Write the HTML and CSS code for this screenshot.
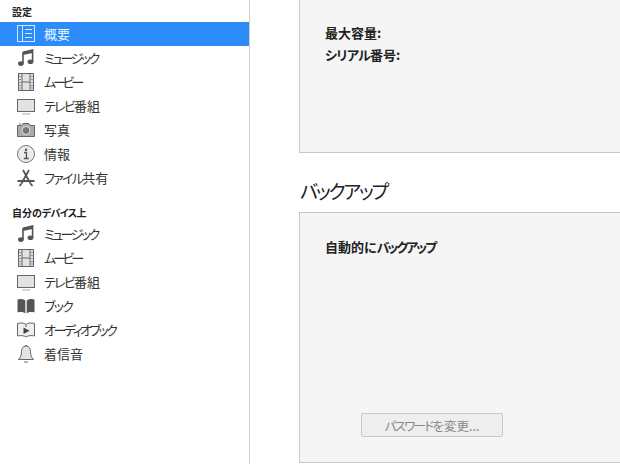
FILE: index.html
```html
<!DOCTYPE html>
<html lang="ja">
<head>
<meta charset="utf-8">
<title>設定</title>
<link rel="stylesheet" href="styles.css">
</head>
<body>
<svg class="defs" width="0" height="0" aria-hidden="true">
  <symbol id="i-music" viewBox="0 0 20 20"><path d="M7 4.200 16.600 2v11.600" fill="none" stroke="#555" stroke-width="1.600"/><path d="M7 4 16.600 2v3L7 7z" fill="#555"/><path d="M7 4v11" stroke="#555" stroke-width="1.600"/><ellipse cx="4.900" cy="15.600" rx="2.900" ry="2.300" fill="#555"/><ellipse cx="14.500" cy="13.800" rx="2.900" ry="2.300" fill="#555"/></symbol>
  <symbol id="i-film" viewBox="0 0 20 20"><rect x="2.500" y="1.500" width="15" height="17" fill="#e2e2e2" stroke="#666"/><path d="M6 2v16M14 2v16M6 10h8" stroke="#666"/><path d="M3 4.500h3M3 7.500h3M3 10.500h3M3 13.500h3M3 16h3M14 4.500h3M14 7.500h3M14 10.500h3M14 13.500h3M14 16h3" stroke="#999"/></symbol>
  <symbol id="i-tv" viewBox="0 0 20 20"><rect x="1.500" y="3.500" width="17" height="12" fill="#e2e2e2" stroke="#666"/><path d="M6 18h8" stroke="#aaa"/></symbol>
  <symbol id="i-camera" viewBox="0 0 20 20"><path d="M1.500 5.500h4l1.500-2h6l1.500 2h4v11h-17z" fill="#aaa" stroke="#666"/><circle cx="10" cy="10.500" r="4" fill="#777" stroke="#e4e4e4"/><path d="M3 4h2" stroke="#777"/></symbol>
  <symbol id="i-info" viewBox="0 0 20 20"><circle cx="10" cy="10" r="8.500" fill="#ececec" stroke="#777"/><circle cx="10" cy="5.800" r="1.200" fill="#555"/><path d="M8 8.500h2.400v5.500M7.800 14.500h5" fill="none" stroke="#555" stroke-width="1.400"/></symbol>
  <symbol id="i-app" viewBox="0 0 20 20"><path d="M7 2l7.500 13.500M13 2 5.500 15.500M1.500 13h17" fill="none" stroke="#555" stroke-width="1.800"/><path d="M3.500 18l2-2.500M16.500 18l-2-2.500" stroke="#555" stroke-width="1.800"/></symbol>
  <symbol id="i-book" viewBox="0 0 20 20"><path d="M9.300 4.500C8 3 4 2.500 1.500 3.500v13c2.500-.8 6-.5 7.800 1zM10.700 4.500c1.300-1.500 5.300-2 7.800-1v13c-2.500-.8-6-.5-7.800 1z" fill="#555"/></symbol>
  <symbol id="i-audio" viewBox="0 0 20 20"><path d="M10 4.500C8.500 3 4.500 2.500 1.500 3.500v12.500c3-.8 6.500-.5 8.500 1 2-1.500 5.500-1.800 8.500-1V3.500c-3-1-7-.5-8.500 1z" fill="#eee" stroke="#666"/><path d="M10 4.500V7" stroke="#666"/><path d="M7.500 7.500v6.500l6-3.200z" fill="#444"/></symbol>
  <symbol id="i-bell" viewBox="0 0 20 20"><path d="M10 2c-3 0-4.500 2.500-4.500 5.500 0 4-1 6-3 8h15c-2-2-3-4-3-8C14.500 4.500 13 2 10 2z" fill="#e4e4e4" stroke="#666"/><path d="M8 17.300c.5 1.300 3.500 1.300 4 0" fill="none" stroke="#666"/><path d="M9.200 1.500h1.600" stroke="#666"/></symbol>
  <symbol id="i-list" viewBox="0 0 20 20"><rect x="1.500" y="1.500" width="17" height="16" fill="none" stroke="#c4f0ff"/><path d="M6.500 2v15M9 5.500h7M9 9.500h7M9 13.500h7" stroke="#c4f0ff"/></symbol>
</svg>
<div class="app">
  <nav class="sidebar">
    <h2 class="side-title">設定</h2>
    <ul class="side-list">
      <li class="item selected"><svg class="icon"><use href="#i-list"/></svg><span class="txt">概要</span></li>
      <li class="item"><svg class="icon"><use href="#i-music"/></svg><span class="txt k4">ミュージック</span></li>
      <li class="item"><svg class="icon"><use href="#i-film"/></svg><span class="txt k2">ムービー</span></li>
      <li class="item"><svg class="icon"><use href="#i-tv"/></svg><span class="txt"><span class="k">テレビ</span>番組</span></li>
      <li class="item"><svg class="icon"><use href="#i-camera"/></svg><span class="txt">写真</span></li>
      <li class="item"><svg class="icon"><use href="#i-info"/></svg><span class="txt">情報</span></li>
      <li class="item"><svg class="icon"><use href="#i-app"/></svg><span class="txt"><span class="k">ファイル</span>共有</span></li>
    </ul>
    <h2 class="side-title second">自分の<span class="k3">デバイス</span>上</h2>
    <ul class="side-list">
      <li class="item"><svg class="icon"><use href="#i-music"/></svg><span class="txt k4">ミュージック</span></li>
      <li class="item"><svg class="icon"><use href="#i-film"/></svg><span class="txt k2">ムービー</span></li>
      <li class="item"><svg class="icon"><use href="#i-tv"/></svg><span class="txt"><span class="k">テレビ</span>番組</span></li>
      <li class="item"><svg class="icon"><use href="#i-book"/></svg><span class="txt k">ブック</span></li>
      <li class="item"><svg class="icon"><use href="#i-audio"/></svg><span class="txt k4">オーディオブック</span></li>
      <li class="item"><svg class="icon"><use href="#i-bell"/></svg><span class="txt">着信音</span></li>
    </ul>
  </nav>
  <main class="content">
    <section class="panel panel-top">
      <p class="label">最大容量:</p>
      <p class="label"><span class="k3">シリアル</span>番号:</p>
    </section>
    <h1 class="heading">バックアップ</h1>
    <section class="panel panel-backup">
      <p class="label">自動的に<span class="k5">バックアップ</span></p>
      <button class="btn" disabled><span class="k">パスワード</span>を変更...</button>
    </section>
  </main>
</div>
</body>
</html>
```
FILE: styles.css
```css
* { box-sizing: border-box; }
html, body { margin: 0; height: 100%; }
body {
  background: #fff;
  color: #1a1a1a;
  font-family: "Noto Sans CJK JP", "Noto Sans", sans-serif;
  font-feature-settings: "palt";
  overflow: hidden;
}
.defs { position: absolute; }
.app { display: flex; width: 620px; height: 464px; }
.sidebar { width: 250px; flex: none; border-right: 1px solid #d0d0d0; }
.side-title {
  margin: 0;
  height: 22px;
  padding: 5px 0 0 12px;
  font-size: 10px;
  line-height: 14px;
  font-weight: 700;
  color: #222;
}
.side-title.second { height: 32px; padding-top: 17px; line-height: 12px; }
.side-list { list-style: none; margin: 0; padding: 0; }
.item {
  display: flex;
  align-items: center;
  height: 24px;
  padding-left: 16px;
  gap: 8px;
  font-size: 13px;
  color: #333;
}
.txt { margin-top: -2px; }
.k { letter-spacing: -1.7px; }
.k2 { letter-spacing: -3.2px; }
.k3 { letter-spacing: -.7px; }
.k4 { letter-spacing: -2.500px; }
.k5 { letter-spacing: -2px; }
.item.selected { background: #2d8cf8; color: #e8f6ff; }
.icon { width: 20px; height: 20px; flex: none; }
.content { flex: 1; padding-left: 49px; min-width: 0; }
.panel {
  background: #f5f5f5;
  border: 1px solid #c8c8c8;
  border-right: 0;
  padding-left: 25px;
}
.panel-top { height: 153px; border-top: 0; padding-top: 24px; }
.label { margin: 0; height: 22px; font-size: 13px; line-height: 18px; font-weight: 700; color: #222; }
.panel-backup .label { margin-top: 1px; }
.heading {
  margin: 0;
  height: 59px;
  padding: 23px 0 0 1px;
  font-size: 19px;
  line-height: 30px;
  font-weight: 400;
  letter-spacing: -2.2px;
  color: #222;
}
.panel-backup { height: 251px; padding-top: 24px; display: flex; flex-direction: column; align-items: flex-start; }
.btn {
  margin: 153px 0 0 36px;
  width: 142px;
  height: 24px;
  padding: 0;
  background: #eeeeee;
  border: 1px solid #c8c8c8;
  border-radius: 2px;
  font: inherit;
  font-size: 12.5px;
  color: #888;
}
```
